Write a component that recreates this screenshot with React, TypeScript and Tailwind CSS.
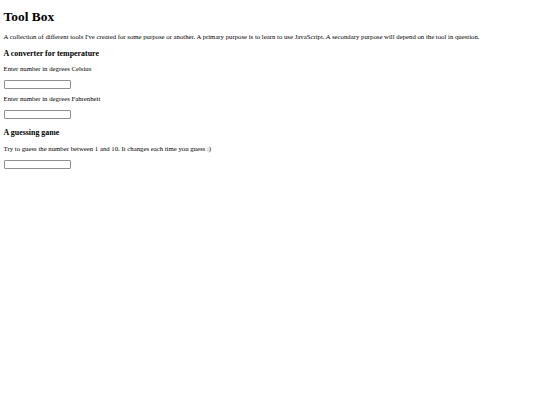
export default function App() {
  return (
    <div className="min-h-[405px] bg-white px-[3.6px] pt-[8.6px] font-['Liberation_Serif',serif] text-black">
      <h1 className="text-[13.4px] font-bold leading-[16px]">Tool Box</h1>
      <p className="mt-[8.3px] text-[6.75px] leading-[8px]">
        A collection of different tools I've created for some purpose or another. A primary purpose is to learn to use JavaScript. A secondary purpose will depend on the tool in question.
      </p>

      {/* Temperature converter */}
      <h3 className="mt-[8.3px] text-[7.9px] font-bold leading-[9px]">A converter for temperature</h3>
      <p className="mt-[7px] text-[6.75px] leading-[8px]">Enter number in degrees Celsius</p>
      <input type="text" className="mt-[7px] block h-[9px] w-[67px] rounded-[1px] border border-[#8f8f8f] bg-white" />
      <p className="mt-[6px] text-[6.75px] leading-[8px]">Enter number in degrees Fahrenheit</p>
      <input type="text" className="mt-[7px] block h-[9px] w-[67px] rounded-[1px] border border-[#8f8f8f] bg-white" />

      {/* Guessing game */}
      <h3 className="mt-[8.5px] text-[7.9px] font-bold leading-[9px]">A guessing game</h3>
      <p className="mt-[8.3px] text-[6.75px] leading-[8px]">Try to guess the number between 1 and 10. It changes each time you guess :)</p>
      <input type="text" className="mt-[7px] block h-[9px] w-[67px] rounded-[1px] border border-[#8f8f8f] bg-white" />
    </div>
  );
}
